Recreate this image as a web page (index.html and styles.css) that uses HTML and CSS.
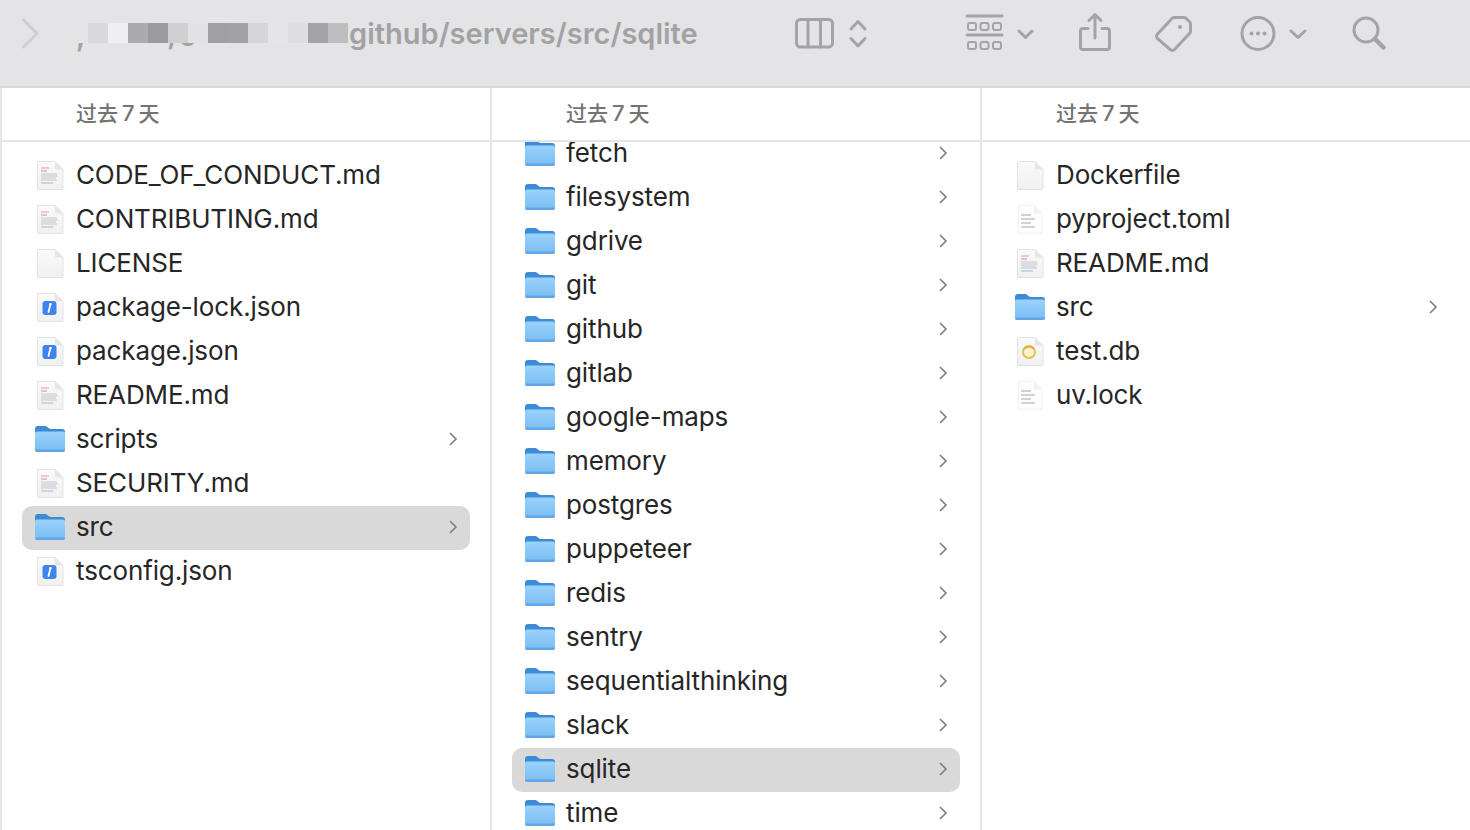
FILE: index.html
```html
<!DOCTYPE html>
<html>
	<head>
		<meta charset="UTF-8">
		<title>sqlite</title>
		<link rel="stylesheet" href="styles.css">
	</head>
	<body>
		<svg class="defs" width="0" height="0">
			<defs>
				<linearGradient id="folderFill" x1="0" y1="0" x2="0" y2="1">
					<stop offset="0" stop-color="#9ad2fa"/>
					<stop offset="1" stop-color="#7abcf3"/>
				</linearGradient>
				<linearGradient id="pageFill" x1="0" y1="0" x2="0" y2="1">
					<stop offset="0" stop-color="#fafafa"/>
					<stop offset="1" stop-color="#f0f0f0"/>
				</linearGradient>
				<symbol id="folder" viewBox="0 0 30 30">
					<path d="M0 5a3 3 0 0 1 3-3h7c1.500 0 2 .6 3 1.600s1.500 1.400 3 1.400h11a3 3 0 0 1 3 3v6H0z" fill="#3c8bd4"/>
					<path d="M0 9.500a2 2 0 0 1 2-2h26a2 2 0 0 1 2 2V25.500a2.500 2.500 0 0 1-2.500 2.500H2.500A2.500 2.500 0 0 1 0 25.500z" fill="url(#folderFill)"/>
					<path d="M0 25.500h30a2.500 2.500 0 0 1-2.500 2.500H2.500A2.500 2.500 0 0 1 0 25.500z" fill="#62a5e3"/>
				</symbol>
				<symbol id="page" viewBox="0 0 30 30">
					<path d="M3.500 1.500H20l8 8V29a.5.5 0 0 1-.5.5H3a.5.5 0 0 1-.5-.5V2.500a1 1 0 0 1 1-1z" fill="url(#pageFill)" stroke="#e3e3e3"/>
					<path d="M20 1.500V8a1.500 1.500 0 0 0 1.500 1.500H28z" fill="#e6e6e6"/>
				</symbol>
				<symbol id="markdown" viewBox="0 0 30 30">
					<use href="#page"/>
					<path d="M6 8h8" stroke="#dd98bf" stroke-width="1"/>
					<path d="M6 11h6" stroke="#c08ab6" stroke-width="1"/>
					<path d="M6 14h16M6 16h17M6 18h15M6 20h16" stroke="#c2c5cb" stroke-width="1"/>
					<path d="M6 23h12" stroke="#9dbadc" stroke-width="1"/>
				</symbol>
				<symbol id="plain" viewBox="0 0 30 30">
					<path d="M3.500 1.500H19l8 8V29H3z" fill="#fdfdfd" stroke="#f1f1f1"/>
					<path d="M19 1.500V9.500h8z" fill="#f1f1f1"/>
					<path d="M6 11h10M6 15h14M6 19h10M6 23h14" stroke="#a8a8a8" stroke-width="1.200"/>
				</symbol>
				<symbol id="json" viewBox="0 0 30 30">
					<use href="#page"/>
					<rect x="7.500" y="9" width="14" height="14" rx="3" fill="#3f83ec"/>
					<path d="M15.500 12 13.500 20" stroke="#fff" stroke-width="1.800" stroke-linecap="round"/>
					<path d="M14 12h3" stroke="#fff" stroke-width="1.200"/>
				</symbol>
				<symbol id="db" viewBox="0 0 30 30">
					<use href="#page"/>
					<circle cx="14" cy="16" r="6" fill="#fbf3d0" stroke="#e4c04e" stroke-width="2"/>
					<path d="M9.500 13c2-3 7-3 9 0" fill="none" stroke="#d9a93a" stroke-width="1.600"/>
				</symbol>
				<symbol id="chev" viewBox="0 0 10 16">
					<path d="M2 2l6 6-6 6" fill="none" stroke="#7d7d7d" stroke-width="1.600"/>
				</symbol>
			</defs>
		</svg>

		<div class="toolbar">
			<svg class="tb back" width="20" height="44" viewBox="0 0 20 44"><path d="M3.500 9 17 22.500 3.500 36" stroke="#cfcfd1" stroke-width="3"/></svg>
			<div class="path">
				<span class="frag frag-a">,</span>
				<span class="frag frag-b">/o</span>
				<div class="mosaic">
					<i class="m1"></i><i class="m2"></i><i class="m3"></i><i class="m4"></i><i class="m5"></i><i class="m6"></i><i class="m7"></i><i class="m8"></i><i class="m9"></i><i class="m10"></i><i class="m11"></i><i class="m12"></i><i class="m13"></i>
				</div>
				<span class="path-text">github/servers/src/sqlite</span>
			</div>
			<svg class="tb" width="80" height="44" viewBox="0 0 80 44">
				<rect x="6.500" y="8.500" width="36" height="27.500" rx="4"/>
				<path d="M18 8.500V36M30.500 8.500V36"/>
				<path d="M61 18l7-7.500 7 7.500M61 27.500l7 7.500 7-7.500"/>
			</svg>
			<svg class="tb tb-grid" width="80" height="44" viewBox="0 0 80 44">
				<path d="M7 5H42M7 24H42"/>
				<rect class="thin" x="8" y="12" width="8" height="7" rx="2"/>
				<rect class="thin" x="20.500" y="12" width="8" height="7" rx="2"/>
				<rect class="thin" x="33" y="12" width="8" height="7" rx="2"/>
				<rect class="thin" x="8" y="31" width="8" height="7" rx="2"/>
				<rect class="thin" x="20.500" y="31" width="8" height="7" rx="2"/>
				<rect class="thin" x="33" y="31" width="8" height="7" rx="2"/>
				<path d="M59 20l6.500 6.500L72 20"/>
			</svg>
			<svg class="tb tb-share" width="40" height="44" viewBox="0 0 40 44">
				<path d="M13 17.500H8a2.500 2.500 0 0 0-2.500 2.500v16A2.500 2.500 0 0 0 8 38.500h24a2.500 2.500 0 0 0 2.500-2.500V20a2.500 2.500 0 0 0-2.500-2.500h-5"/>
				<path d="M20 27V4M14 9.500l6-6 6 6"/>
			</svg>
			<svg class="tb tb-tag" width="47" height="44" viewBox="0 0 47 44">
				<path d="M22 7.500a3 3 0 0 1 2-1h10a3 3 0 0 1 2 .8l3.500 3.400a3 3 0 0 1 1 2.100v7.400a3 3 0 0 1-.8 2L24.500 38.500a3 3 0 0 1-4.200.2L7.500 27.500a3 3 0 0 1-.2-4.200z"/>
				<circle class="dot" cx="30" cy="16" r="2"/>
			</svg>
			<svg class="tb tb-more" width="75" height="44" viewBox="0 0 75 44">
				<circle cx="22" cy="22.500" r="16"/>
				<circle class="dot" cx="15.500" cy="22.500" r="2"/>
				<circle class="dot" cx="22" cy="22.500" r="2"/>
				<circle class="dot" cx="28.500" cy="22.500" r="2"/>
				<path d="M55 20l7 6.500 7-6.500"/>
			</svg>
			<svg class="tb tb-search" width="44" height="44" viewBox="0 0 44 44">
				<circle cx="18" cy="19" r="12"/>
				<path class="thick" d="M27 28l8.500 8.500"/>
			</svg>
		</div>

		<div class="columns">
			<div class="col">
				<div class="col-head">过去<span class="num">7</span>天</div>
				<div class="list">
					<div class="row"><svg class="ico"><use href="#markdown"/></svg><span>CODE_OF_CONDUCT.md</span></div>
					<div class="row"><svg class="ico"><use href="#markdown"/></svg><span>CONTRIBUTING.md</span></div>
					<div class="row"><svg class="ico"><use href="#page"/></svg><span>LICENSE</span></div>
					<div class="row"><svg class="ico"><use href="#json"/></svg><span>package-lock.json</span></div>
					<div class="row"><svg class="ico"><use href="#json"/></svg><span>package.json</span></div>
					<div class="row"><svg class="ico"><use href="#markdown"/></svg><span>README.md</span></div>
					<div class="row"><svg class="ico"><use href="#folder"/></svg><span>scripts</span><svg class="arrow"><use href="#chev"/></svg></div>
					<div class="row"><svg class="ico"><use href="#markdown"/></svg><span>SECURITY.md</span></div>
					<div class="row selected"><svg class="ico"><use href="#folder"/></svg><span>src</span><svg class="arrow"><use href="#chev"/></svg></div>
					<div class="row"><svg class="ico"><use href="#json"/></svg><span>tsconfig.json</span></div>
				</div>
			</div>
			<div class="col">
				<div class="col-head">过去<span class="num">7</span>天</div>
				<div class="list scrolled">
					<div class="row"><svg class="ico"><use href="#folder"/></svg><span>fetch</span><svg class="arrow"><use href="#chev"/></svg></div>
					<div class="row"><svg class="ico"><use href="#folder"/></svg><span>filesystem</span><svg class="arrow"><use href="#chev"/></svg></div>
					<div class="row"><svg class="ico"><use href="#folder"/></svg><span>gdrive</span><svg class="arrow"><use href="#chev"/></svg></div>
					<div class="row"><svg class="ico"><use href="#folder"/></svg><span>git</span><svg class="arrow"><use href="#chev"/></svg></div>
					<div class="row"><svg class="ico"><use href="#folder"/></svg><span>github</span><svg class="arrow"><use href="#chev"/></svg></div>
					<div class="row"><svg class="ico"><use href="#folder"/></svg><span>gitlab</span><svg class="arrow"><use href="#chev"/></svg></div>
					<div class="row"><svg class="ico"><use href="#folder"/></svg><span>google-maps</span><svg class="arrow"><use href="#chev"/></svg></div>
					<div class="row"><svg class="ico"><use href="#folder"/></svg><span>memory</span><svg class="arrow"><use href="#chev"/></svg></div>
					<div class="row"><svg class="ico"><use href="#folder"/></svg><span>postgres</span><svg class="arrow"><use href="#chev"/></svg></div>
					<div class="row"><svg class="ico"><use href="#folder"/></svg><span>puppeteer</span><svg class="arrow"><use href="#chev"/></svg></div>
					<div class="row"><svg class="ico"><use href="#folder"/></svg><span>redis</span><svg class="arrow"><use href="#chev"/></svg></div>
					<div class="row"><svg class="ico"><use href="#folder"/></svg><span>sentry</span><svg class="arrow"><use href="#chev"/></svg></div>
					<div class="row"><svg class="ico"><use href="#folder"/></svg><span>sequentialthinking</span><svg class="arrow"><use href="#chev"/></svg></div>
					<div class="row"><svg class="ico"><use href="#folder"/></svg><span>slack</span><svg class="arrow"><use href="#chev"/></svg></div>
					<div class="row selected"><svg class="ico"><use href="#folder"/></svg><span>sqlite</span><svg class="arrow"><use href="#chev"/></svg></div>
					<div class="row"><svg class="ico"><use href="#folder"/></svg><span>time</span><svg class="arrow"><use href="#chev"/></svg></div>
				</div>
			</div>
			<div class="col">
				<div class="col-head">过去<span class="num">7</span>天</div>
				<div class="list">
					<div class="row"><svg class="ico"><use href="#page"/></svg><span>Dockerfile</span></div>
					<div class="row"><svg class="ico"><use href="#plain"/></svg><span>pyproject.toml</span></div>
					<div class="row"><svg class="ico"><use href="#markdown"/></svg><span>README.md</span></div>
					<div class="row"><svg class="ico"><use href="#folder"/></svg><span>src</span><svg class="arrow"><use href="#chev"/></svg></div>
					<div class="row"><svg class="ico"><use href="#db"/></svg><span>test.db</span></div>
					<div class="row"><svg class="ico"><use href="#plain"/></svg><span>uv.lock</span></div>
				</div>
			</div>
		</div>
	</body>
</html>
```

FILE: styles.css
```css
html,body{
	margin:0;
	height:100%;
	overflow:hidden;
	background:#fff;
}
body{
	font-family:Inter,"Noto Sans CJK SC",sans-serif;
	display:flex;
	flex-direction:column;
}
.defs{
	position:absolute;
}

/* toolbar */
.toolbar{
	height:88px;
	padding-bottom:20px;
	box-sizing:border-box;
	flex:none;
	display:flex;
	align-items:center;
	background:#e4e4e6;
	border-bottom:2px solid #d8d8da;
}
.tb{
	flex:none;
	fill:none;
	stroke:#a4a4a6;
	stroke-width:3;
	stroke-linecap:round;
	stroke-linejoin:round;
}
.tb .thin{
	stroke-width:2;
}
.tb .thick{
	stroke-width:4.500;
}
.tb .dot{
	fill:#a4a4a6;
	stroke:none;
}
.back{
	margin-left:20px;
}
.path{
	position:relative;
	width:702px;
	margin-left:48px;
	flex:none;
	display:flex;
	align-items:center;
}
.mosaic{
	display:flex;
	height:20px;
	position:relative;
	flex:none;
}
.mosaic i{
	display:block;
	width:20px;
	height:20px;
}
.m1{background:#d9d9db;}
.m2{background:#efeff1;}
.m3{background:#ababad;}
.m4{background:#9b9b9d;}
.m5{background:#cfcfd1;}
.m6{background:#e2e2e4;}
.m7{background:#a0a0a2;}
.m8{background:#a2a2a4;}
.m9{background:#d6d6d8;}
.m10{background:#e5e5e7;}
.m11{background:#dfdfe1;}
.m12{background:#a3a3a5;}
.m13{background:#bebec0;}
.path-text{
	margin-left:1px;
	font-size:29px;
	font-weight:600;
	color:#a2a2a4;
	white-space:nowrap;
}
.frag{
	position:absolute;
	font-size:29px;
	line-height:1;
	font-weight:600;
	color:#a2a2a4;
	top:5px;
}
.frag-a{
	left:-12px;
}
.frag-b{
	left:80px;
}
.tb-grid{
	margin-left:90px;
}
.tb-share{
	margin-left:35px;
}
.tb-tag{
	margin-left:35px;
}
.tb-more{
	margin-left:39px;
}
.tb-search{
	margin-left:37px;
}

/* columns */
.columns{
	flex:1;
	display:grid;
	grid-template-columns:490px 490px 490px;
	min-height:0;
}
.col{
	border-left:2px solid #e6e6e6;
	display:flex;
	flex-direction:column;
	min-height:0;
	overflow:hidden;
}
.col-head{
	height:54px;
	flex:none;
	border-bottom:2px solid #e4e4e4;
	padding-left:74px;
	box-sizing:border-box;
	line-height:50px;
	font-size:21px;
	font-weight:500;
	color:#747474;
	position:relative;
	z-index:1;
	background:#fff;
}
.num{
	margin:0 4px;
	font-size:22px;
}
.list{
	padding-top:12px;
}
.scrolled{
	padding-top:0;
	margin-top:-10px;
}
.row{
	height:44px;
	padding-bottom:2px;
	box-sizing:border-box;
	margin-left:20px;
	width:448px;
	display:flex;
	align-items:center;
	font-size:26px;
	letter-spacing:-0.12px;
	color:#262626;
	border-radius:10px;
	white-space:nowrap;
}
.row span{
	margin-bottom:2px;
}
.selected{
	background:#d9d9d9;
}
.ico{
	width:30px;
	height:30px;
	margin-left:13px;
	margin-right:11px;
	flex:none;
}
.arrow{
	width:10px;
	height:16px;
	margin-left:auto;
	margin-right:12px;
	flex:none;
}
```
